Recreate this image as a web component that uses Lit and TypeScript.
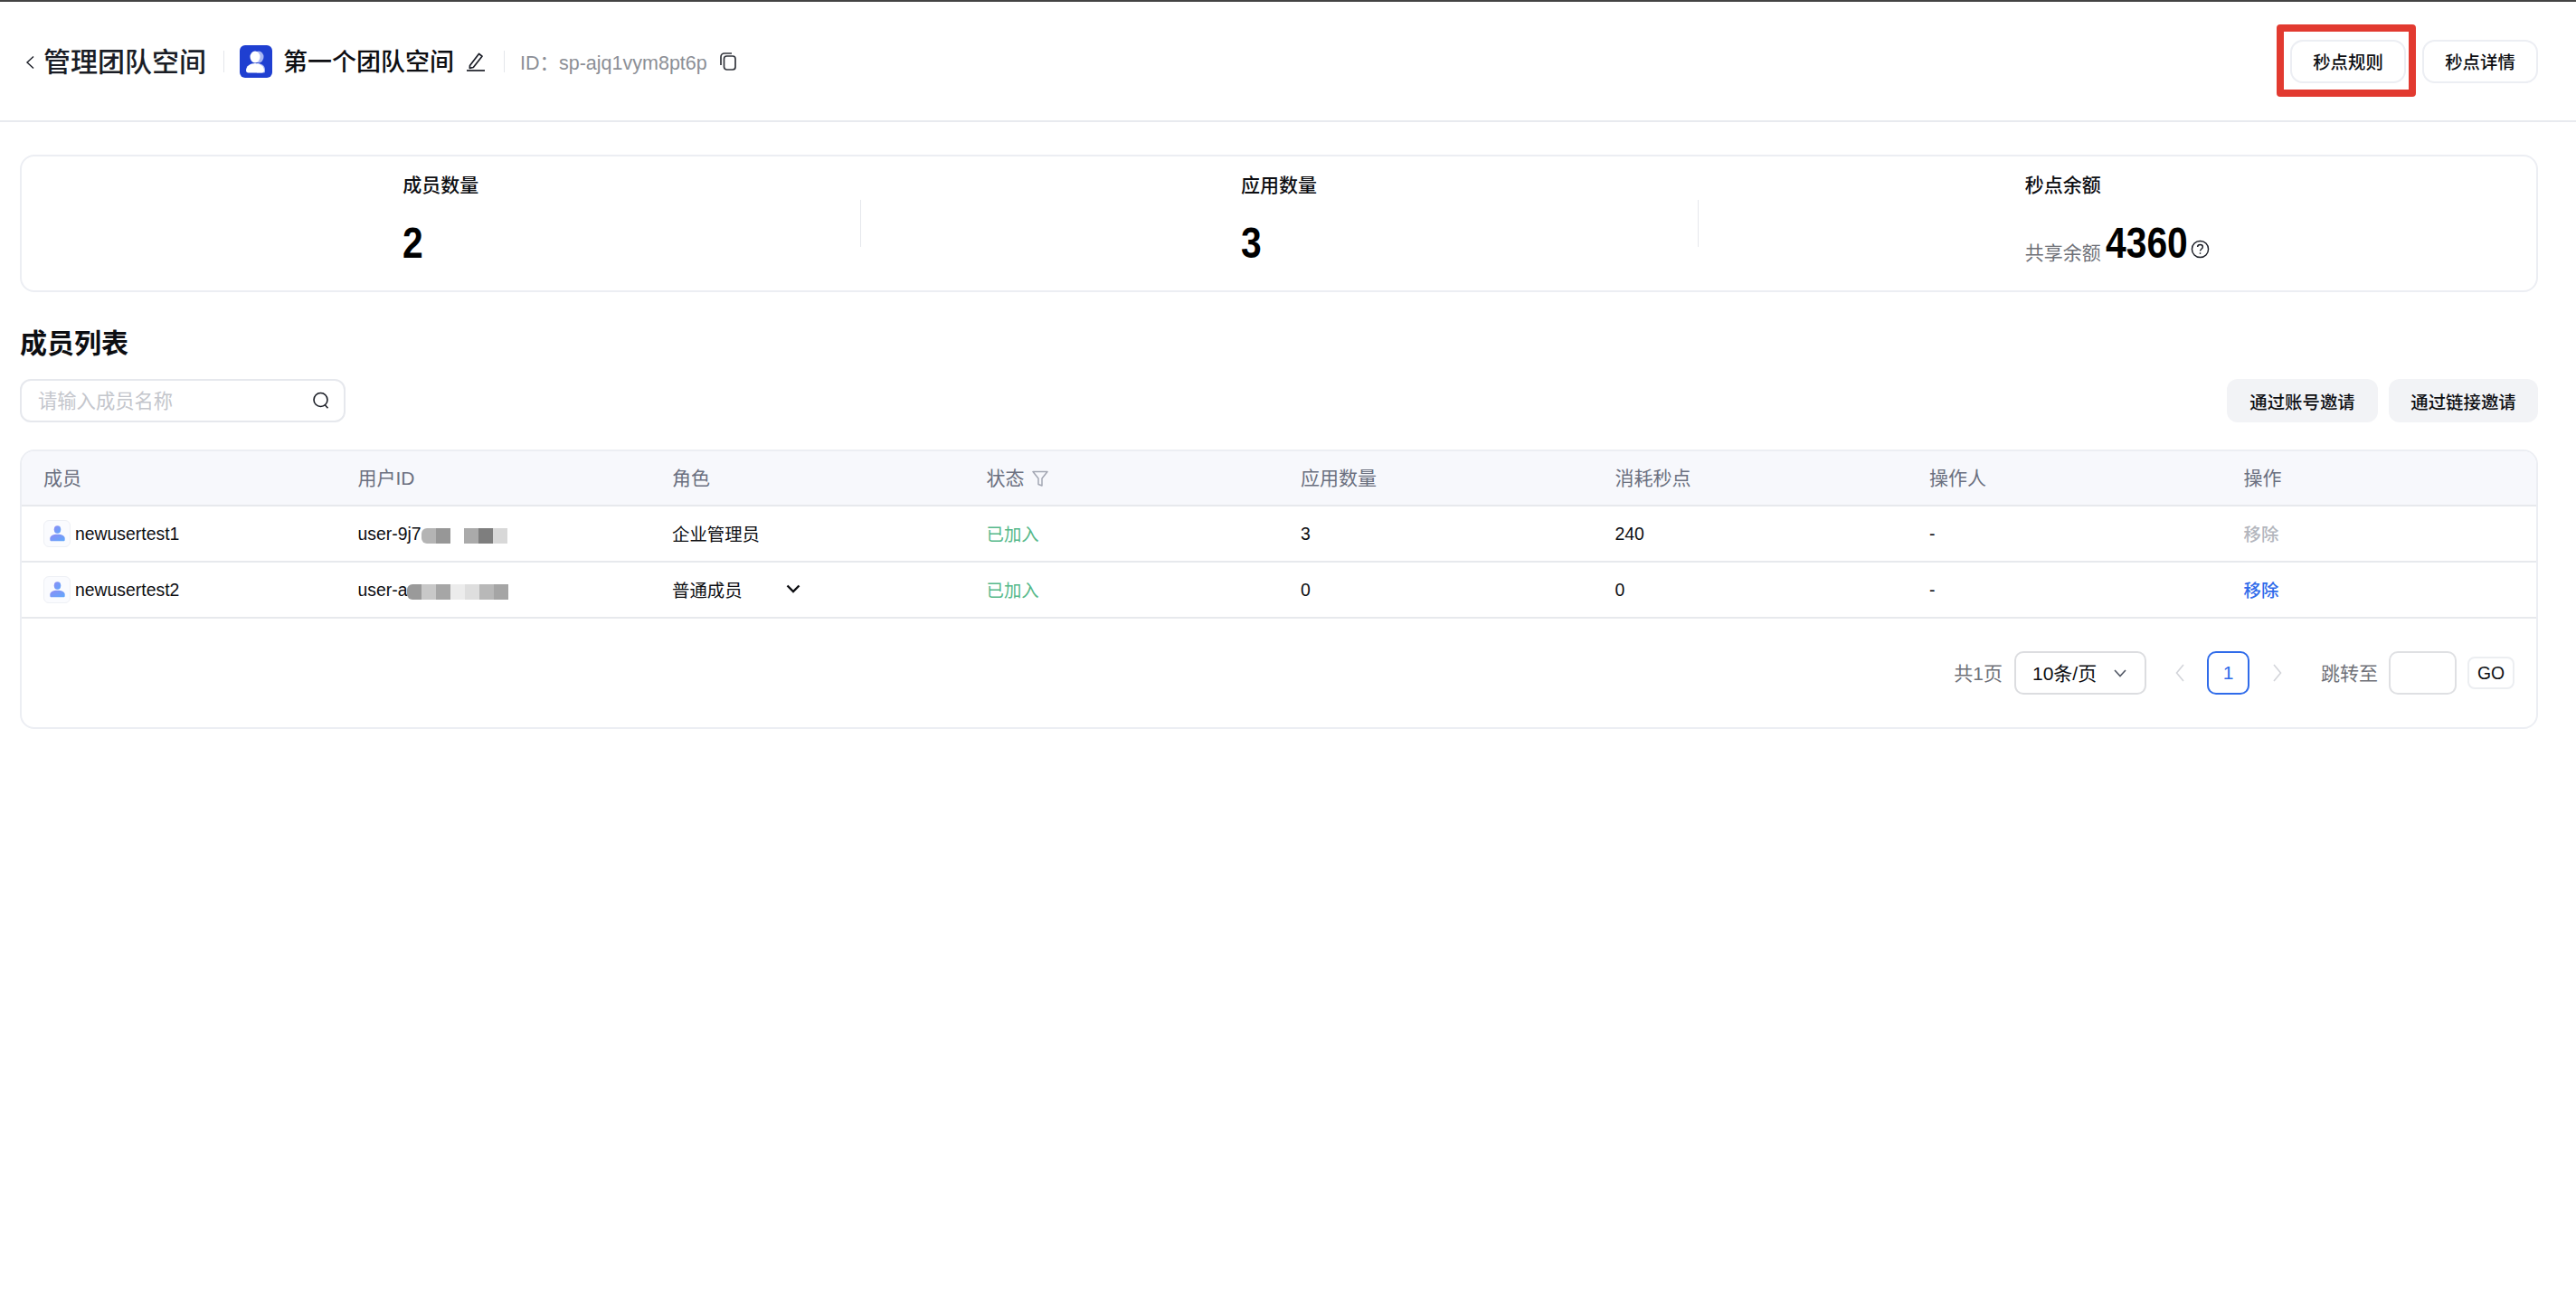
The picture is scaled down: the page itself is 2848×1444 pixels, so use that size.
import { LitElement, html, css, svg } from "lit";
import { customElement } from "lit/decorators.js";

const personGrad = svg`<defs><linearGradient id="pg" x1="0" y1="0" x2="1" y2="1"><stop offset="0" stop-color="#8f8cf5"/><stop offset="1" stop-color="#5fa8fb"/></linearGradient></defs>`;

const members = [
  { name: "newusertest1", id: "user-9j7", mosaic: [["#b4b4b4", "#979797"], ["#aaaaaa", "#7e7e7e", "#d8d8d8"]], role: "企业管理员", editable: false, apps: "3", used: "240", removable: false },
  { name: "newusertest2", id: "user-a", mosaic: [["#9a9a9a", "#c8c8c8", "#a6a6a6", "#ececec", "#dedede", "#b8b8b8", "#a5a5a5"]], role: "普通成员", editable: true, apps: "0", used: "0", removable: true },
];

@customElement("app-root")
export class AppRoot extends LitElement {
  static styles = css`
    :host { display: block; min-height: 1444px; background: #fff; color: #0d0e12; font-family: "Liberation Sans", "Noto Sans CJK SC", sans-serif; font-size: 19.4px; border-top: 2px solid #444; box-sizing: border-box; }
    * { box-sizing: border-box; }
    svg { display: block; flex: none; }
    .header { height: 133px; border-bottom: 2px solid #e8eaef; display: flex; align-items: center; padding: 0 42px 0 27px; }
    .back { width: 20px; height: 20px; margin-right: 1px; margin-top: 2px; }
    .title { font-size: 30px; color: #1a1d26; line-height: 40px; font-weight: 500; padding-top: 2px; }
    .sep { width: 1px; height: 24px; background: #e4e6eb; }
    .sep.a { margin: 0 17px 0 19px; }
    .sep.b { margin: 0 17px 0 20px; }
    .logo { width: 36px; height: 36px; border-radius: 6px; background: #1f3fd1; margin-right: 12px; }
    .name { font-size: 27px; line-height: 40px; font-weight: 500; color: #0d0e12; padding-top: 2px; }
    .edit { margin-left: 13px; }
    .sid { font-size: 21.5px; color: #8c8f96; }
    .copy { margin-left: 14px; }
    .spacer { flex: 1; }
    .btn { height: 48px; border: 2px solid #eceef3; border-radius: 14px; background: #fff; width: 128px; display: flex; align-items: center; justify-content: center; font-size: 19.4px; font-weight: 500; position: relative; color: #0d0e12; }
    .btn + .btn { margin-left: 18px; }
    .mark { position: absolute; left: -17px; right: -13px; top: -19px; bottom: -17px; border: 8px solid #e23a30; border-radius: 4px; }
    .main { padding: 36px 42px 0 22px; }
    .stats { height: 152px; border: 2px solid #eceef3; border-radius: 16px; display: flex; }
    .stat { flex: 1; display: flex; justify-content: center; padding-top: 17px; position: relative; }
    .stat + .stat::before { content: ""; position: absolute; left: 0; top: 48px; height: 52px; width: 1px; background: #e6e8ec; }
    .stat-t { font-size: 21px; font-weight: 500; line-height: 30px; }
    .stat-v { margin-top: 23px; height: 52px; display: flex; align-items: center; font-weight: 700; font-size: 48px; line-height: 52px; color: #000; }
    .num { display: inline-block; transform: scaleX(0.85); transform-origin: 0 50%; }
    .share { display: flex; align-items: center; height: 52px; margin-top: 23px; }
    .share .lbl { font-size: 21px; color: #6f7178; margin-top: 22px; margin-right: 5px; line-height: 30px; }
    .share .stat-v { margin: 0; }
    .share .num { margin-right: -16px; }
    .share svg { margin: 12px 0 0 3px; }
    h2 { margin: 0; font-size: 30px; line-height: 40px; font-weight: 700; padding-top: 37px; color: #0d0e12; }
    .tools { display: flex; align-items: center; margin-top: 19px; gap: 12px; }
    .search { width: 360px; height: 48px; border: 2px solid #e6e8ed; border-radius: 12px; display: flex; align-items: center; padding: 0 15px 0 18px; justify-content: space-between; color: #c4c6cc; font-size: 21.3px; }
    .search span { padding-bottom: 3px; }
    .inv { height: 48px; border-radius: 12px; background: #f2f3f6; display: flex; align-items: center; justify-content: center; font-size: 19.4px; font-weight: 500; }
    .inv.a { width: 167px; }
    .inv.b { width: 165px; }
    .table { margin-top: 30px; border: 2px solid #eceef3; border-radius: 16px; overflow: hidden; }
    .row { display: grid; grid-template-columns: repeat(8, 1fr); height: 62px; border-bottom: 2px solid #e7e9ed; align-items: center; }
    .row.head { height: 61px; background: #f7f8fc; color: #6b7080; font-size: 21px; }
    .row.head > div { padding-bottom: 4px; }
    .row > div { padding-left: 24px; display: flex; align-items: center; min-width: 0; }
    .row > div.cjk { padding-bottom: 2px; }
    .avatar { width: 30px; height: 30px; border: 1px solid #eef0f5; border-radius: 6px; background: #fafbfe; display: flex; align-items: center; justify-content: center; margin-right: 5px; }
    .mosaic { display: flex; height: 17px; margin-top: 5px; }
    .mosaic i { display: block; width: 16px; height: 100%; }
    .mosaic i:first-child { border-radius: 6px 0 0 6px; }
    .mosaic.second { margin-left: 15px; }
    .mosaic.second i:first-child { border-radius: 0; }
    .role { width: 142px; display: flex; align-items: center; justify-content: space-between; }
    .ok { color: #56b98a; }
    .rm { color: #2f6bea; font-weight: 500; }
    .rm.off { color: #b3b6bd; }
    .filter { margin-left: 8px; margin-top: 4px; }
    .pager { height: 120px; display: flex; align-items: center; justify-content: flex-end; padding-right: 24px; font-size: 21px; color: #6f7178; }
    .pager span, .sel span { padding-bottom: 2px; }
    .sel { width: 146px; height: 48px; border: 2px solid #dcdde0; border-radius: 10px; margin-left: 13px; display: flex; align-items: center; justify-content: space-between; padding: 0 20px 0 18px; color: #0d0e12; }
    .cur { width: 47px; height: 48px; border: 2px solid #2f6bea; border-radius: 10px; color: #2f6bea; display: flex; align-items: center; justify-content: center; font-size: 21px; font-weight: 500; margin: 0 26px 0 25px; }
    .prev { margin-left: 32px; }
    .jump { margin-left: 43px; }
    .inp { width: 75px; height: 48px; border: 2px solid #dfe0e3; border-radius: 10px; margin-left: 12px; }
    .go { width: 52px; height: 36px; border: 2px solid #eceef1; border-radius: 8px; margin-left: 12px; display: flex; align-items: center; justify-content: center; font-size: 19.4px; color: #0d0e12; }
  `;

  private person() {
    return html`<svg width="17" height="18" viewBox="0 0 20 22">${personGrad}<ellipse cx="10" cy="5.6" rx="4.6" ry="5.2" fill="url(#pg)"/><path d="M1.5 21c-.8 0-1.5-.6-1.5-1.5v-2C0 14.5 3.5 12 10 12s10 2.500 10 5.500v2c0 .9-.7 1.500-1.500 1.500z" fill="url(#pg)"/></svg>`;
  }

  render() {
    return html`
      <div class="header">
        <svg class="back" viewBox="0 0 20 20" fill="none" stroke="#1a1d26" stroke-width="1.4"><path d="M10 3.500L3 10l7 6.500"/></svg>
        <span class="title">管理团队空间</span>
        <span class="sep a"></span>
        <div class="logo">
          <svg width="36" height="36" viewBox="0 0 36 36"><ellipse cx="21" cy="13" rx="5.5" ry="6.4" fill="#a9b6f3"/><path d="M19 20c5 0 9 2.500 9 7v2c0 1-.7 1.500-1.500 1.500H19z" fill="#a9b6f3"/><ellipse cx="17" cy="13" rx="5.500" ry="6.400" fill="#fff"/><path d="M7 28c0-5 4.500-8 10-8s10 3 10 8c0 1.500-1 2.500-2.500 2.500h-15C8 30.500 7 29.500 7 28z" fill="#fff"/></svg>
        </div>
        <span class="name">第一个团队空间</span>
        <svg class="edit" width="22" height="22" viewBox="0 0 22 22" fill="none" stroke="#1a1d26" stroke-width="1.7"><path d="M4.500 15.500L14.500 2.500l3.500 2.700-9.700 12.300-4 .8z" stroke-linejoin="round"/><path d="M1 21h20"/></svg>
        <span class="sep b"></span>
        <span class="sid">ID：sp-ajq1vym8pt6p</span>
        <svg class="copy" width="18" height="20" viewBox="0 0 18 20" fill="none" stroke="#33363d" stroke-width="1.7"><rect x="4.500" y="4" width="12.500" height="15" rx="3"/><path d="M1 14V5c0-2.200 1.800-4 4-4h8"/></svg>
        <span class="spacer"></span>
        <div class="btn">秒点规则<span class="mark"></span></div>
        <div class="btn">秒点详情</div>
      </div>

      <div class="main">
        <div class="stats">
          <div class="stat"><div><div class="stat-t">成员数量</div><div class="stat-v"><span class="num">2</span></div></div></div>
          <div class="stat"><div><div class="stat-t">应用数量</div><div class="stat-v"><span class="num">3</span></div></div></div>
          <div class="stat"><div>
            <div class="stat-t">秒点余额</div>
            <div class="share"><span class="lbl">共享余额</span><span class="stat-v"><span class="num">4360</span></span>
              <svg width="21" height="21" viewBox="0 0 22 22" fill="none" stroke="#1a1d26" stroke-width="1.500"><circle cx="11" cy="11" r="9.500"/><path d="M8 8.500C8 6.800 9.300 5.800 11 5.800s3 1 3 2.600c0 2.300-3 2.300-3 4.700"/><path d="M11 15v1.600"/></svg>
            </div>
          </div></div>
        </div>

        <h2>成员列表</h2>
        <div class="tools">
          <div class="search"><span>请输入成员名称</span>
            <svg width="20" height="20" viewBox="0 0 20 20" fill="none" stroke="#1a1d26" stroke-width="1.600"><circle cx="9.500" cy="9" r="7.500"/><path d="M14.500 15l3 3.200"/></svg>
          </div>
          <span class="spacer"></span>
          <div class="inv a">通过账号邀请</div>
          <div class="inv b">通过链接邀请</div>
        </div>

        <div class="table">
          <div class="row head">
            <div>成员</div><div>用户ID</div><div>角色</div>
            <div>状态<svg class="filter" width="18" height="18" viewBox="0 0 18 18" fill="none" stroke="#a3a7b3" stroke-width="1.500"><path d="M1 1.500h16l-6 7.500v8l-4-1.500V9z" stroke-linejoin="round"/></svg></div>
            <div>应用数量</div><div>消耗秒点</div><div>操作人</div><div>操作</div>
          </div>
          ${members.map((m) => html`
            <div class="row">
              <div><span class="avatar">${this.person()}</span>${m.name}</div>
              <div>${m.id}${m.mosaic.map((g, i) => html`<span class="mosaic ${i ? "second" : ""}">${g.map((c) => html`<i style="background:${c}"></i>`)}</span>`)}</div>
              <div class="cjk">${m.editable
                ? html`<span class="role">${m.role}<svg width="16" height="10" viewBox="0 0 16 10" fill="none" stroke="#0d0e12" stroke-width="2.400"><path d="M1.500 1.500L8 8l6.500-6.500"/></svg></span>`
                : m.role}</div>
              <div class="ok cjk">已加入</div>
              <div>${m.apps}</div>
              <div>${m.used}</div>
              <div>-</div>
              <div class="rm cjk ${m.removable ? "" : "off"}">移除</div>
            </div>
          `)}
          <div class="pager">
            <span>共1页</span>
            <div class="sel"><span>10条/页</span><svg width="14" height="9" viewBox="0 0 14 9" fill="none" stroke="#555b68" stroke-width="1.700"><path d="M1 1l6 6.500L13 1"/></svg></div>
            <svg class="prev" width="10" height="20" viewBox="0 0 10 20" fill="none" stroke="#d3d5da" stroke-width="1.600"><path d="M9 1L1.500 10 9 19"/></svg>
            <div class="cur">1</div>
            <svg width="10" height="20" viewBox="0 0 10 20" fill="none" stroke="#d3d5da" stroke-width="1.600"><path d="M1 1l7.500 9L1 19"/></svg>
            <span class="jump">跳转至</span>
            <div class="inp"></div>
            <div class="go">GO</div>
          </div>
        </div>
      </div>
    `;
  }
}
